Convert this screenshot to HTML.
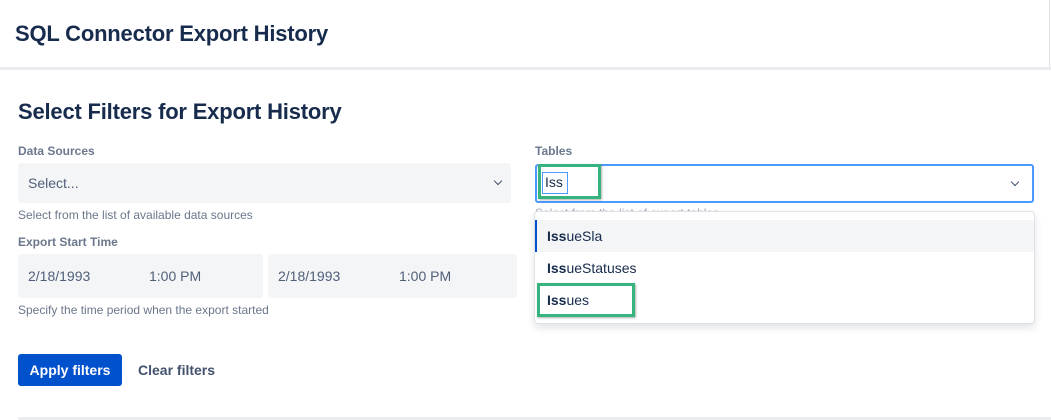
<!DOCTYPE html>
<html><head><style>
*{box-sizing:border-box;margin:0;padding:0}
body{width:1051px;height:420px;overflow:hidden;background:#fff;font-family:"Liberation Sans",sans-serif;color:#172b4d;position:relative}
.a{position:absolute}
.lbl{font-size:12px;font-weight:bold;color:#6b778c}
.help{font-size:12px;color:#6b778c}
.inp{background:#f4f5f7;border-radius:3px;font-size:14px;color:#505f79}
.chev{position:absolute;width:6px;height:6px;border-right:1.6px solid #42526e;border-bottom:1.6px solid #42526e;transform:rotate(45deg)}
</style></head><body>
<div class="a" style="left:15px;top:21px;font-size:22px;font-weight:bold;color:#172b4d;letter-spacing:-0.2px">SQL Connector Export History</div>
<div class="a" style="left:1049px;top:0;width:1px;height:68px;background:#dfe1e6"></div>
<div class="a" style="left:0;top:67px;width:1051px;height:3px;background:#ebecf0"></div>
<div class="a" style="left:18px;top:99px;font-size:22px;font-weight:bold;letter-spacing:-0.2px">Select Filters for Export History</div>

<div class="a lbl" style="left:18px;top:144px">Data Sources</div>
<div class="a inp" style="left:18px;top:163px;width:493px;height:40px"><span class="a" style="left:10px;top:12px">Select...</span><div class="chev" style="left:477px;top:15px"></div></div>
<div class="a help" style="left:18px;top:208px">Select from the list of available data sources</div>
<div class="a lbl" style="left:18px;top:235px">Export Start Time</div>
<div class="a inp" style="left:18px;top:254px;width:245px;height:44px"><span class="a" style="left:10px;top:14px">2/18/1993</span><span class="a" style="left:131px;top:14px">1:00 PM</span></div>
<div class="a inp" style="left:268px;top:254px;width:249px;height:44px"><span class="a" style="left:10px;top:14px">2/18/1993</span><span class="a" style="left:131px;top:14px">1:00 PM</span></div>
<div class="a help" style="left:18px;top:303px">Specify the time period when the export started</div>
<div class="a" style="left:18px;top:354px;width:104px;height:32px;background:#0052cc;border-radius:3px;color:#fff;font-size:14px;font-weight:bold;text-align:center;line-height:32px">Apply filters</div>
<div class="a" style="left:138px;top:362px;font-size:14px;font-weight:bold;color:#42526e">Clear filters</div>
<div class="a" style="left:18px;top:417px;width:1033px;height:3px;background:#ebecf0"></div>

<div class="a lbl" style="left:535px;top:144px">Tables</div>
<div class="a" style="left:535px;top:164px;width:499px;height:39px;border:2px solid #4c9aff;border-radius:3px;background:#fff"><div class="chev" style="left:475px;top:13px"></div></div>
<div class="a" style="left:538px;top:164px;width:63px;height:35px;border:3px solid #36b37e;box-shadow:1px 1px 2px rgba(0,0,0,.3)"></div>
<div class="a" style="left:542px;top:172px;width:26px;height:22px;border:1.5px solid #4c9aff;font-size:14px;line-height:19px;padding-left:2px;color:#172b4d">Iss</div>
<div class="a help" style="left:535px;top:206px;color:#a5adba">Select from the list of export tables</div>
<div class="a" style="left:534px;top:211px;width:501px;height:113px;border:1px solid #dfe1e6;border-radius:4px;background:#fff;box-shadow:0 4px 8px rgba(9,30,66,.12)">
 <div class="a" style="left:0;top:8px;width:499px;height:32px;background:#f4f5f7;border-left:2px solid #0052cc"></div>
 <div class="a" style="left:12px;top:16px;font-size:14px"><b>Iss</b>ueSla</div>
 <div class="a" style="left:12px;top:48px;font-size:14px"><b>Iss</b>ueStatuses</div>
 <div class="a" style="left:12px;top:80px;font-size:14px"><b>Iss</b>ues</div>
</div>
<div class="a" style="left:537px;top:283px;width:98px;height:34px;border:3px solid #36b37e;box-shadow:1px 1px 2px rgba(0,0,0,.3)"></div>
</body></html>
